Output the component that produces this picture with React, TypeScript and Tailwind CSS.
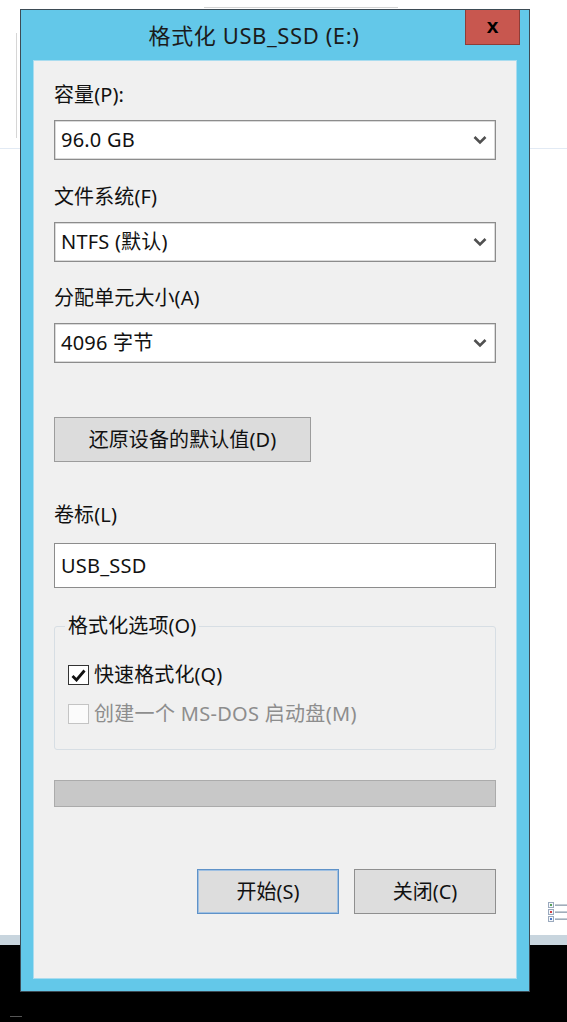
import React from "react";

const FONT = '"Noto Sans", "Noto Sans CJK SC", sans-serif';

function Chevron() {
  return (
    <svg width="14" height="10" viewBox="0 0 14 10" className="shrink-0">
      <path d="M1.5 2 L7 7.5 L12.5 2" fill="none" stroke="#505050" strokeWidth="2.6" strokeLinecap="butt" strokeLinejoin="miter" />
    </svg>
  );
}

function Select({ value }: { value: string }) {
  return (
    <div className="flex h-[40px] w-[442px] items-center justify-between border border-[#8c8c8c] bg-white pl-[6px] pr-[8px] shadow-[inset_0_0_0_0.5px_#b5b5b5]">
      <span className="text-[20px] leading-none tracking-[0.2px] text-[#111]">{value}</span>
      <Chevron />
    </div>
  );
}

function Label({ children, className = "" }: { children: React.ReactNode; className?: string }) {
  return <div className={"h-[24px] text-[20px] leading-[24px] tracking-[0.1px] text-[#111] " + className}>{children}</div>;
}

export default function App() {
  return (
    <div className="relative h-[1022px] w-[567px] overflow-hidden bg-white" style={{ fontFamily: FONT }}>
      {/* desktop background decorations */}
      <div className="absolute left-[204px] top-[7px] h-[1px] w-[194px] bg-[#d4d4d4]" />
      <div className="absolute left-[16px] top-[33px] h-[105px] w-[1px] bg-[#d6d6d6]" />
      <div className="absolute left-0 top-[148px] h-[1px] w-[567px] bg-[#e2eaf4]" />
      <div className="absolute left-0 top-[935px] h-[10px] w-[567px] bg-[#c8d5de]" />
      <div className="absolute left-0 top-[945px] h-[77px] w-[567px] bg-black" />
      <div className="absolute left-[10px] top-[1016px] h-[1px] w-[12px] bg-[#555]" />
      <svg className="absolute left-[548px] top-[902px]" width="19" height="20" viewBox="0 0 19 20">
        <rect x="0.5" y="0.5" width="5" height="5" fill="#f4f7fb" stroke="#9aa9bd" strokeWidth="1" />
        <rect x="2" y="2" width="2" height="2" fill="#5aa05a" />
        <rect x="7" y="2.5" width="12" height="1.3" fill="#8a99aa" />
        <rect x="0.5" y="7.5" width="5" height="5" fill="#f4f7fb" stroke="#9aa9bd" strokeWidth="1" />
        <rect x="2" y="9" width="2" height="2" fill="#d04040" />
        <rect x="7" y="9.5" width="12" height="1.3" fill="#8a99aa" />
        <rect x="0.5" y="14.5" width="5" height="5" fill="#f4f7fb" stroke="#9aa9bd" strokeWidth="1" />
        <rect x="2" y="16" width="2" height="2" fill="#4a78c8" />
        <rect x="7" y="16.5" width="12" height="1.3" fill="#8a99aa" />
      </svg>

      {/* window */}
      <div className="relative ml-[20px] mt-[9px] w-[510px] border border-[#3d4b55] bg-[#63c8e9]">
        {/* title bar */}
        <div className="flex h-[50px] items-start">
          <div className="flex h-[50px] flex-1 items-center justify-center pl-[22px] text-[22px] tracking-[0.6px] text-[#1b1b1b]">
            格式化 USB_SSD (E:)
          </div>
          <div className="mr-[9px] flex h-[35px] w-[55px] items-center justify-center border border-t-0 border-[#8e3d37] bg-[#c8574f] pb-[4px]">
            <span className="text-[21px] font-bold leading-none text-black" style={{ fontFamily: '"Liberation Sans", sans-serif' }}>x</span>
          </div>
        </div>

        {/* content */}
        <div className="mx-[12px] mb-[12px] flex h-[919px] flex-col border border-[#a9dcef] bg-[#f0f0f0] px-[20px]">
          <Label className="mt-[22px]">容量(P):</Label>
          <div className="mt-[13px]"><Select value="96.0 GB" /></div>

          <Label className="mt-[25px]">文件系统(F)</Label>
          <div className="mt-[13px]"><Select value="NTFS (默认)" /></div>

          <Label className="mt-[24px]">分配单元大小(A)</Label>
          <div className="mt-[13px]"><Select value="4096 字节" /></div>

          <div className="mt-[54px] flex h-[45px] w-[257px] items-center justify-center border border-[#9c9c9c] bg-[#dcdcdc] text-[20px] tracking-[0.1px] text-[#111]">
            还原设备的默认值(D)
          </div>

          <Label className="mt-[41px]">卷标(L)</Label>
          <div className="mt-[16px] flex h-[45px] w-[442px] items-center border border-[#8c8c8c] bg-white pl-[6px] text-[20px] tracking-[0.2px] text-[#111]">
            USB_SSD
          </div>

          <fieldset className="mt-[26px] w-[442px] rounded-[3px] border border-[#d7dee4] pb-[23px]">
            <legend className="ml-[10px] h-[24px] px-[3px] text-[20px] leading-[24px] tracking-[0.1px] text-[#111]">格式化选项(O)</legend>
            <div className="mt-[25px] flex h-[24px] items-center gap-[5px] pl-[13px]">
              <div className="flex h-[20px] w-[21px] items-center justify-center border border-[#333] bg-white">
                <svg width="15" height="13" viewBox="0 0 15 13">
                  <path d="M1.5 7 L5.5 11 L13.5 1.5" fill="none" stroke="#111" strokeWidth="2.8" />
                </svg>
              </div>
              <span className="text-[20px] leading-[24px] tracking-[0.1px] text-[#111]">快速格式化(Q)</span>
            </div>
            <div className="mt-[15px] flex h-[24px] items-center gap-[5px] pl-[13px]">
              <div className="h-[20px] w-[21px] border border-[#c4c4c4] bg-[#fbfbfb]" />
              <span className="text-[20px] leading-[24px] tracking-[0.3px] text-[#8d8d8d]">创建一个 MS-DOS 启动盘(M)</span>
            </div>
          </fieldset>

          <div className="mt-[30px] h-[27px] w-[442px] border border-[#ababab] bg-[#c8c8c8]" />

          <div className="mt-[62px] flex gap-[15px] pl-[143px]">
            <div className="flex h-[45px] w-[142px] items-center justify-center border border-[#5f92c8] bg-[#dddddd] text-[20px] text-[#111] shadow-[inset_0_0_0_1px_#9fc0e2]">
              开始(S)
            </div>
            <div className="flex h-[45px] w-[142px] items-center justify-center border border-[#8f8f8f] bg-[#dddddd] text-[20px] text-[#111]">
              关闭(C)
            </div>
          </div>
        </div>
      </div>
    </div>
  );
}
